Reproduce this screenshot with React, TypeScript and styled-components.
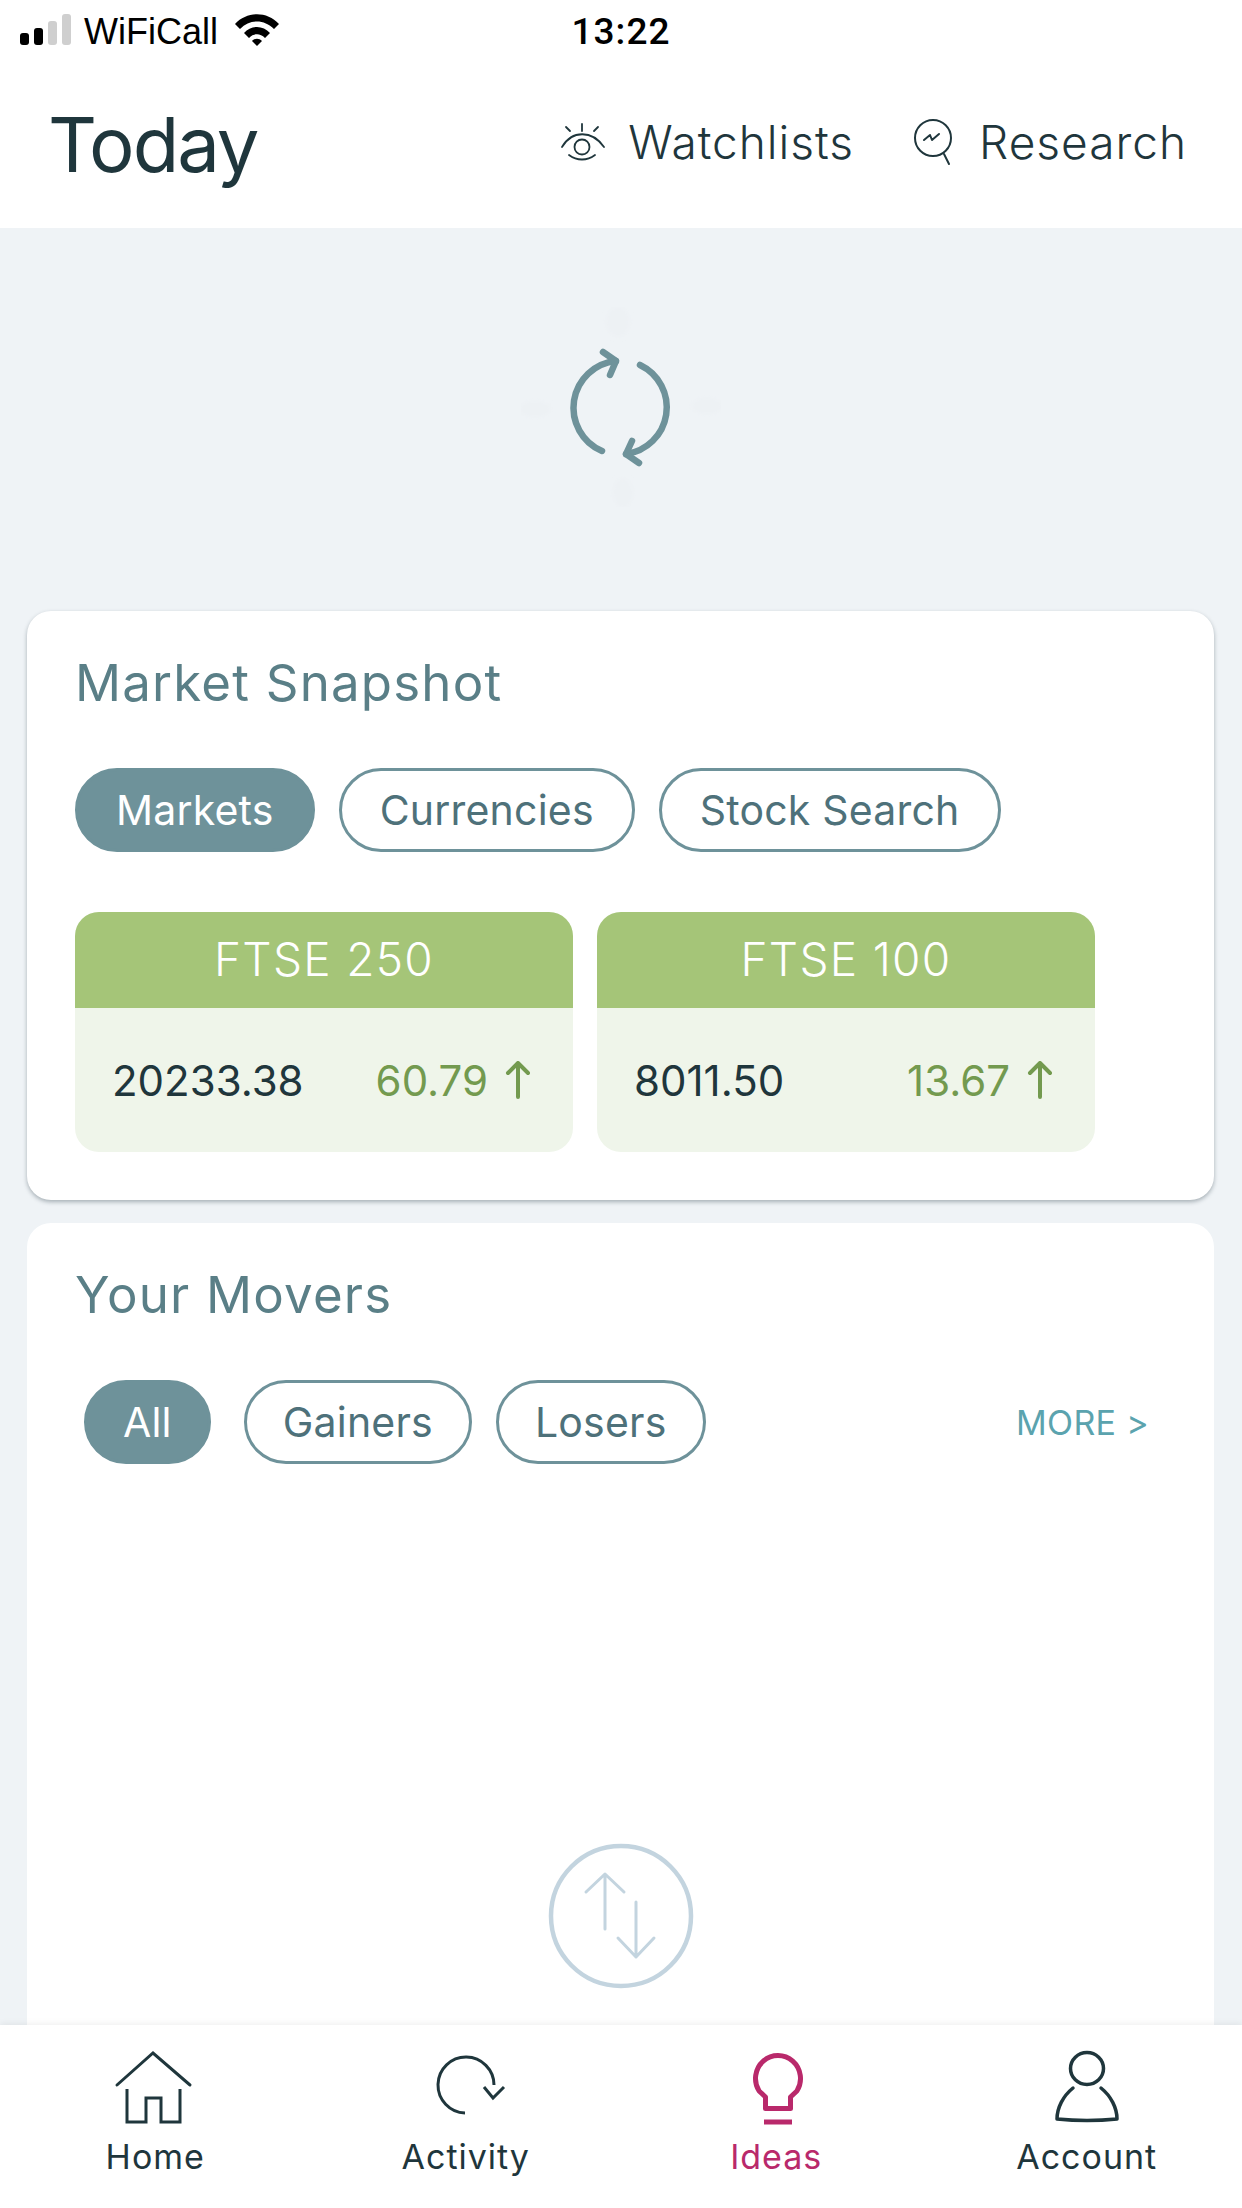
import React from "react";
import styled, { createGlobalStyle } from "styled-components";

const GlobalStyle = createGlobalStyle`
  html, body {
    margin: 0;
    padding: 0;
    background: #fff;
  }
  * {
    box-sizing: border-box;
  }
`;

const Page = styled.div`
  width: 1242px;
  height: 2208px;
  display: flex;
  flex-direction: column;
  overflow: hidden;
  background: #eff3f6;
  font-family: Inter, "Liberation Sans", sans-serif;
`;

const StatusBar = styled.div`
  height: 60px;
  flex: none;
  background: #fff;
  padding-top: 12px;
  display: grid;
  grid-template-columns: 1fr auto 1fr;
  color: #000;
`;

const Carrier = styled.div`
  padding-left: 20px;
  display: flex;
  align-items: flex-start;
  font: 400 36px/40px "Liberation Sans", sans-serif;
`;

const CarrierName = styled.span`
  margin: 0 16px 0 12px;
`;

const Clock = styled.div`
  font: 500 37px/40px Roboto, "Liberation Sans", sans-serif;
  letter-spacing: 1px;
`;

const Header = styled.header`
  height: 168px;
  flex: none;
  background: #fff;
  padding: 0 55px 0 48px;
  display: flex;
  align-items: center;
  justify-content: space-between;
  color: #1f363c;
`;

const PageTitle = styled.h1`
  margin: 0;
  font-size: 76px;
  line-height: 90px;
  font-weight: 400;
  letter-spacing: -2px;
`;

const HeaderLinks = styled.nav`
  display: flex;
  gap: 59px;
  margin-bottom: 5px;
`;

const HeaderLink = styled.a<{ $gap: number }>`
  display: flex;
  align-items: center;
  gap: ${(p) => p.$gap}px;
  font-size: 46px;
  line-height: 56px;
  letter-spacing: 1px;
  font-weight: 300;
`;

const SpinnerArea = styled.div`
  height: 383px;
  flex: none;
  padding-bottom: 25px;
  display: flex;
  align-items: center;
  justify-content: center;
`;

const Card = styled.section<{ $grow?: boolean }>`
  margin: 0 28px 0 27px;
  padding: 42px 48px 48px;
  background: #fff;
  border-radius: 24px;
  ${(p) =>
    p.$grow
      ? "flex: 1; min-height: 0; margin-top: 23px; padding-bottom: 0; border-radius: 24px 24px 0 0;"
      : "flex: none; box-shadow: 0 2px 4px rgba(30, 50, 60, 0.35);"}
`;

const CardTitle = styled.h2`
  margin: 0;
  font-size: 51px;
  line-height: 60px;
  font-weight: 400;
  letter-spacing: 1.2px;
  color: #5a7f87;
`;

const PillRow = styled.div`
  margin-top: 55px;
  display: flex;
  align-items: center;
  gap: 24px;
`;

const Pill = styled.div<{ $active?: boolean }>`
  height: 84px;
  padding: 0 38px;
  display: flex;
  align-items: center;
  border: 3px solid #6e929a;
  border-radius: 42px;
  font-size: 41px;
  letter-spacing: 0.2px;
  background: ${(p) => (p.$active ? "#6e929a" : "#fff")};
  color: ${(p) => (p.$active ? "#fff" : "#4e717a")};
`;

const MoverPill = styled(Pill)<{ $spaced?: boolean }>`
  padding: 0 36px;
  margin: ${(p) => (p.$spaced ? "0 9px" : "0")};
`;

const More = styled.a`
  margin-left: auto;
  margin-right: 17px;
  font-size: 34px;
  letter-spacing: 0.3px;
  color: #5ba3ae;
`;

const Tiles = styled.div`
  margin-top: 60px;
  display: flex;
  gap: 24px;
`;

const Tile = styled.div`
  width: 498px;
  height: 240px;
  border-radius: 24px;
  overflow: hidden;
  background: #eff5ea;
`;

const TileHeader = styled.div`
  height: 96px;
  padding-bottom: 2px;
  background: #a5c578;
  color: #fff;
  font-size: 46px;
  font-weight: 300;
  letter-spacing: 1.3px;
  display: flex;
  align-items: center;
  justify-content: center;
`;

const TileBody = styled.div`
  height: 144px;
  padding: 0 42px 0 37px;
  display: flex;
  align-items: center;
  justify-content: space-between;
  font-size: 42px;
  color: #1f363c;
`;

const Change = styled.div`
  display: flex;
  align-items: center;
  gap: 17px;
  color: #739a4f;
`;

const EmptyState = styled.div`
  margin-top: 378px;
  display: flex;
  justify-content: center;
`;

const TabBar = styled.nav`
  position: relative;
  height: 183px;
  flex: none;
  padding-top: 23px;
  display: grid;
  grid-template-columns: repeat(4, 1fr);
  background: #fff;
  box-shadow: 0 -2px 6px rgba(0, 0, 0, 0.06);
`;

const Tab = styled.a<{ $active?: boolean }>`
  display: flex;
  flex-direction: column;
  align-items: center;
  gap: 9px;
  font-size: 34px;
  line-height: 40px;
  letter-spacing: 1px;
  color: ${(p) => (p.$active ? "#b9296b" : "#1f363c")};
`;

const SignalIcon = () => (
  <svg width="52" height="34" viewBox="0 0 52 34">
    <rect x="0" y="21" width="9" height="12" rx="3" fill="#000" />
    <rect x="14" y="16" width="9" height="17" rx="3" fill="#000" />
    <rect x="28" y="9" width="9" height="24" rx="3" fill="#cfcfcf" />
    <rect x="42" y="2" width="9" height="31" rx="3" fill="#cfcfcf" />
  </svg>
);

const WifiIcon = () => (
  <svg width="46" height="36" viewBox="0 0 46 36">
    <path d="M1 12 C13 -1 33 -1 45 12 L40 17 C30 7 16 7 6 17 Z" fill="#000" />
    <path d="M10 21 C17 13 29 13 36 21 L31 26 C26 21 20 21 15 26 Z" fill="#000" />
    <path d="M18 29 C21 26 25 26 28 29 L23 34 Z" fill="#000" />
  </svg>
);

const EyeIcon = () => (
  <svg width="46" height="38" viewBox="0 0 46 38" fill="none" stroke="#1f363c" strokeWidth="1.8" strokeLinecap="round">
    <path d="M22 1 V8 M6 4 L10 8 M38 4 L34 8" />
    <path d="M2 24 C12 7 32 7 44 24" />
    <path d="M9 32 C17 38 27 38 35 32" />
    <circle cx="22" cy="24" r="7.5" />
  </svg>
);

const ResearchIcon = () => (
  <svg width="40" height="48" viewBox="0 0 40 48" fill="none" stroke="#1f363c" strokeWidth="2" strokeLinecap="round" strokeLinejoin="round">
    <circle cx="20" cy="20" r="18" />
    <path d="M31 36 L36 46" />
    <path d="M11 22 L17 17 L19 22 L26 16" />
  </svg>
);

const SpinnerIcon = () => (
  <svg width="200" height="200" viewBox="-100 -100 200 200" fill="none" stroke="#6e929a" strokeWidth="6.5" strokeLinecap="round" strokeLinejoin="round">
    <defs>
      <filter id="soft">
        <feGaussianBlur stdDeviation="2" />
      </filter>
    </defs>
    <g fill="#edf1f4" stroke="none" filter="url(#soft)">
      <ellipse cx="-3" cy="-85" rx="12" ry="15" />
      <ellipse cx="2" cy="86" rx="10" ry="15" />
      <ellipse cx="-86" cy="2" rx="16" ry="8" />
      <ellipse cx="86" cy="-1" rx="16" ry="8" />
    </g>
    <path d="M-19 44 A47 47 0 0 1 -5 -46" />
    <path d="M-18 -55 L-5 -46 L-11 -32" />
    <path d="M19 -42 A47 47 0 0 1 5 47" />
    <path d="M11 34 L5 47 L18 56" />
  </svg>
);

const UpArrow = () => (
  <svg width="26" height="38" viewBox="0 0 26 38" fill="none" stroke="#739a4f" strokeWidth="4" strokeLinecap="round" strokeLinejoin="round">
    <path d="M13 36 V2 M3 12 L13 2 L23 12" />
  </svg>
);

const SwapIcon = () => (
  <svg width="148" height="148" viewBox="0 0 148 148" fill="none" stroke="#c3d4df" strokeLinecap="round" strokeLinejoin="round">
    <circle cx="74" cy="74" r="70" strokeWidth="4.5" />
    <g strokeWidth="3">
      <path d="M58 87 V32 M39 50 L58 32 L77 50" />
      <path d="M89 60 V115 M71 96 L89 115 L107 96" />
    </g>
  </svg>
);

const HomeIcon = () => (
  <svg width="100" height="80" viewBox="0 0 100 80" fill="none" stroke="#1f363c" strokeWidth="3" strokeLinecap="round">
    <path d="M12 37 L48 5 L85 37" />
    <path d="M22 41 V74 H41 V50 H56 V74 H75 V41" strokeLinecap="butt" />
  </svg>
);

const ActivityIcon = () => (
  <svg width="100" height="80" viewBox="0 0 100 80" fill="none" stroke="#1f363c" strokeWidth="3">
    <path d="M49 65 A28 28 0 1 1 78 37" />
    <path d="M68 39 L77 50 L88 39" />
  </svg>
);

const IdeasIcon = () => (
  <svg width="100" height="80" viewBox="0 0 100 80" fill="none" stroke="#b9296b" strokeWidth="5" strokeLinejoin="round">
    <path d="M39.5 49 V60.5 H64.5 V49 L70.9 43 A22.5 23 0 1 0 33.1 43 Z" />
    <path d="M38 74 H66" />
  </svg>
);

const AccountIcon = () => (
  <svg width="100" height="80" viewBox="0 0 100 80" fill="none" stroke="#1f363c" strokeWidth="3.5" strokeLinecap="round" strokeLinejoin="round">
    <ellipse cx="50" cy="20.5" rx="16.5" ry="16" />
    <path d="M36 40 C26 48 20 60 20 71 Q50 74 80 71 C80 60 74 48 64 40" />
  </svg>
);

const tiles = [
  { name: "FTSE 250", value: "20233.38", change: "60.79" },
  { name: "FTSE 100", value: "8011.50", change: "13.67" },
];

const tabs = [
  { label: "Home", icon: <HomeIcon /> },
  { label: "Activity", icon: <ActivityIcon /> },
  { label: "Ideas", icon: <IdeasIcon />, active: true },
  { label: "Account", icon: <AccountIcon /> },
];

export default function App() {
  return (
    <Page>
      <GlobalStyle />
      <StatusBar>
        <Carrier>
          <SignalIcon />
          <CarrierName>WiFiCall</CarrierName>
          <WifiIcon />
        </Carrier>
        <Clock>13:22</Clock>
      </StatusBar>

      <Header>
        <PageTitle>Today</PageTitle>
        <HeaderLinks>
          <HeaderLink $gap={22}>
            <EyeIcon />
            Watchlists
          </HeaderLink>
          <HeaderLink $gap={26}>
            <ResearchIcon />
            Research
          </HeaderLink>
        </HeaderLinks>
      </Header>

      <SpinnerArea>
        <SpinnerIcon />
      </SpinnerArea>

      <Card>
        <CardTitle>Market Snapshot</CardTitle>
        <PillRow>
          <Pill $active>Markets</Pill>
          <Pill>Currencies</Pill>
          <Pill>Stock Search</Pill>
        </PillRow>
        <Tiles>
          {tiles.map((tile) => (
            <Tile key={tile.name}>
              <TileHeader>{tile.name}</TileHeader>
              <TileBody>
                <span>{tile.value}</span>
                <Change>
                  {tile.change}
                  <UpArrow />
                </Change>
              </TileBody>
            </Tile>
          ))}
        </Tiles>
      </Card>

      <Card $grow>
        <CardTitle>Your Movers</CardTitle>
        <PillRow>
          <MoverPill $active $spaced>All</MoverPill>
          <MoverPill>Gainers</MoverPill>
          <MoverPill>Losers</MoverPill>
          <More>MORE &gt;</More>
        </PillRow>
        <EmptyState>
          <SwapIcon />
        </EmptyState>
      </Card>

      <TabBar>
        {tabs.map((tab) => (
          <Tab key={tab.label} $active={tab.active}>
            {tab.icon}
            {tab.label}
          </Tab>
        ))}
      </TabBar>
    </Page>
  );
}
